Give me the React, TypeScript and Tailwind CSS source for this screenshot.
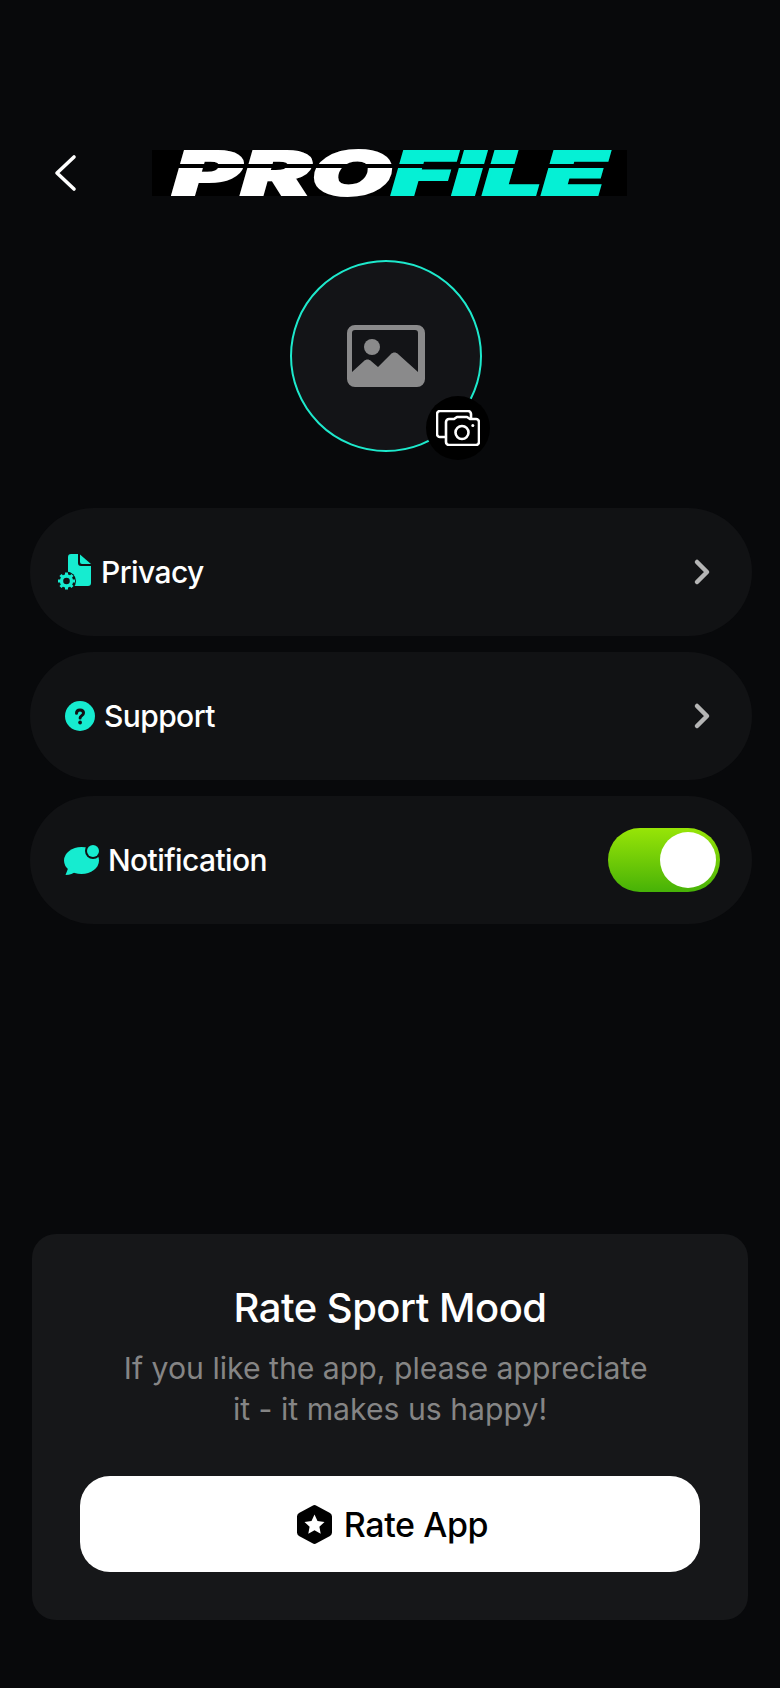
import React from 'react';
import { ChevronRight } from 'lucide-react';

const Row: React.FC<{ icon: React.ReactNode; label: string; gap: string; pad: string; children: React.ReactNode }> = ({ icon, label, gap, pad, children }) => (
    <div className={`h-[128px] rounded-[64px] bg-[#111214] flex items-center justify-between pr-[30px] ${pad}`}>
        <div className={`flex items-center ${gap}`}>
            {icon}
            <span className="text-[30px] font-[550] text-white tracking-[-0.6px]">{label}</span>
        </div>
        {children}
    </div>
);

const DocIcon = () => (
    <svg width="34" height="36" viewBox="0 0 34 36" fill="none">
        <path d="M10 3a3 3 0 0 1 3-3h7v9a3 3 0 0 0 3 3h10v17a3 3 0 0 1-3 3H10Z" fill="#16ecd0" />
        <path d="M22 0.5 33 10H24a2 2 0 0 1-2-2Z" fill="#16ecd0" />
        <circle cx="8.5" cy="27" r="9.5" fill="#111214" />
        <circle cx="8.5" cy="27" r="5" fill="none" stroke="#16ecd0" strokeWidth="3.4" />
        <path d="M8.5 18.5v3M8.5 32.5v3M0 27h3M14 27h3M2.5 21l2 2M12.5 31l2 2M14.5 21l-2 2M4.5 31l-2 2" stroke="#16ecd0" strokeWidth="3" />
    </svg>
);

const HelpIcon = () => (
    <svg width="30" height="30" viewBox="0 0 30 30">
        <circle cx="15" cy="15" r="15" fill="#16ecd0" />
        <path d="M11.500 12.300c0-2.100 1.500-3.300 3.500-3.300s3.500 1.200 3.500 3c0 2.600-3.400 2.600-3.400 5" fill="none" stroke="#111214" strokeWidth="3" strokeLinecap="round" />
        <circle cx="15.100" cy="21.500" r="1.900" fill="#111214" />
    </svg>
);

const ChatIcon = () => (
    <svg width="36" height="31" viewBox="0 0 36 31">
        <ellipse cx="17.500" cy="15.500" rx="17.500" ry="13.500" fill="#16ecd0" />
        <path d="M5 21 1.500 30C6 30 9.500 28.500 12 26Z" fill="#16ecd0" />
        <circle cx="29" cy="6" r="8" fill="#111214" />
        <circle cx="29" cy="6" r="6" fill="#16ecd0" />
    </svg>
);

const ImageIcon = () => (
    <svg width="78" height="62" viewBox="0 0 78 62">
        <path fillRule="evenodd" d="M8 0h62a8 8 0 0 1 8 8v46a8 8 0 0 1-8 8H8a8 8 0 0 1-8-8V8a8 8 0 0 1 8-8Zm0 5a3 3 0 0 0-3 3v39l12-11c2-2 5-2 7 0l7 6 13-13c2-2 5-2 7 0l20 18V8a3 3 0 0 0-3-3Z" fill="#8a8a8b" />
        <circle cx="25" cy="22" r="8" fill="#8a8a8b" />
    </svg>
);

const CameraIcon = () => (
    <svg width="44" height="36" viewBox="0 0 44 36" fill="none" stroke="#fff" strokeWidth="2.600" strokeLinejoin="round">
        <path d="M10 27H4a3 3 0 0 1-3-3V4a3 3 0 0 1 3-3h28a3 3 0 0 1 3 3v4" />
        <path d="M10 12a3 3 0 0 1 3-3h5l3-2h10l3 2h6a3 3 0 0 1 3 3v20a3 3 0 0 1-3 3H13a3 3 0 0 1-3-3Z" fill="#000" />
        <circle cx="26" cy="22.500" r="6.500" />
        <circle cx="36.800" cy="15.500" r="1.500" fill="#fff" stroke="none" />
    </svg>
);

const StarBadge = () => (
    <svg width="35" height="39" viewBox="0 0 35 39">
        <path d="M15.500 .7a4 4 0 0 1 4 0l13.500 7.300a4 4 0 0 1 2 3.500v16a4 4 0 0 1-2 3.500l-13.500 7.300a4 4 0 0 1-4 0L2 31a4 4 0 0 1-2-3.500v-16A4 4 0 0 1 2 8Z" fill="#000" />
        <path d="m17.500 9.500 3 6.500 7 .9-5.100 4.800 1.300 7-6.200-3.500-6.200 3.500 1.300-7-5.100-4.800 7-.9Z" fill="#fff" />
    </svg>
);

const App: React.FC = () => {
    return (
        <div className="w-[780px] h-[1688px] bg-[#08090b] flex flex-col font-['Inter',sans-serif] overflow-hidden">
            <div className="mt-[150px] h-[46px] flex items-center pl-[52px]">
                <svg width="28" height="40" viewBox="0 0 28 40" fill="none">
                    <path d="M22 4 5 20l17 16" stroke="#fff" strokeWidth="3.600" strokeLinecap="round" strokeLinejoin="round" />
                </svg>
                <div className="relative ml-[72px] w-[475px] h-[46px] bg-black flex items-center justify-center">
                    <span className="block text-[61px] leading-[46px] font-black italic whitespace-nowrap scale-x-[1.71] [-webkit-text-stroke:2px_currentColor] text-white">
                        PRO<span className="text-[#05f0d5]">FILE</span>
                    </span>
                    <div className="absolute left-0 right-0 top-[14px] h-[4px] bg-black" />
                </div>
            </div>

            <div className="mt-[64px] self-center mr-[8px] relative w-[192px] h-[192px] rounded-full border-2 border-[#1de9cc] bg-[#131417] flex items-center justify-center">
                <ImageIcon />
                <div className="absolute left-[134px] top-[134px] w-[64px] h-[64px] rounded-full bg-black flex items-center justify-center">
                    <CameraIcon />
                </div>
            </div>

            <div className="mt-[56px] ml-[30px] mr-[28px] flex flex-col gap-[16px]">
                <Row icon={<DocIcon />} label="Privacy" gap="gap-[9px]" pad="pl-[28px]">
                    <ChevronRight size={40} color="#b5b5b5" strokeWidth={2.700} />
                </Row>
                <Row icon={<HelpIcon />} label="Support" gap="gap-[9px]" pad="pl-[35px]">
                    <ChevronRight size={40} color="#b5b5b5" strokeWidth={2.700} />
                </Row>
                <Row icon={<ChatIcon />} label="Notification" gap="gap-[8px]" pad="pl-[34px]">
                    <div className="mr-[2px] w-[112px] h-[64px] rounded-full bg-gradient-to-b from-[#97e507] to-[#46b207] flex items-center justify-end pr-[4px]">
                        <div className="w-[56px] h-[56px] rounded-full bg-white" />
                    </div>
                </Row>
            </div>

            <div className="mt-auto mb-[68px] mx-[32px] h-[386px] rounded-[24px] bg-[#161719] flex flex-col items-center pt-[50px] px-[48px]">
                <h2 className="text-[40px] leading-[48px] font-medium text-white tracking-[-0.5px]">Rate Sport Mood</h2>
                <p className="mt-[16px] text-[30.2px] leading-[41px] text-center text-[#858585] w-[560px]">
                    If you like the app, please appreciate&nbsp;
                    <br />
                    it - it makes us happy!
                </p>
                <button className="mt-[46px] w-full h-[96px] rounded-[30px] bg-white flex items-center justify-center gap-[12px] pl-[5px]">
                    <StarBadge />
                    <span className="text-[34px] font-medium text-black tracking-[-0.4px]">Rate App</span>
                </button>
            </div>
        </div>
    );
};

export default App;
